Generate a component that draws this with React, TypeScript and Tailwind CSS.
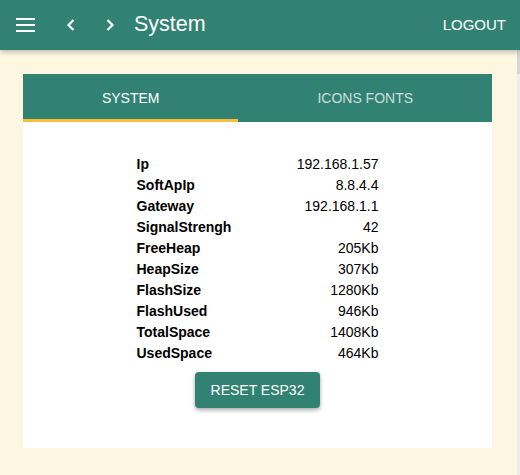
import React, { useState } from "react";

const rows: [string, string][] = [
  ["Ip", "192.168.1.57"],
  ["SoftApIp", "8.8.4.4"],
  ["Gateway", "192.168.1.1"],
  ["SignalStrengh", "42"],
  ["FreeHeap", "205Kb"],
  ["HeapSize", "307Kb"],
  ["FlashSize", "1280Kb"],
  ["FlashUsed", "946Kb"],
  ["TotalSpace", "1408Kb"],
  ["UsedSpace", "464Kb"],
];

export default function App() {
  const [tab, setTab] = useState(0);

  return (
    <div className="h-[475px] flex flex-col bg-[#fdf6e1] font-['Liberation_Sans',Arial,sans-serif] overflow-hidden">
      <header className="relative z-10 h-[50px] shrink-0 flex items-center bg-[#318273] text-white shadow-[0_2px_5px_rgba(0,0,0,0.25)]">
        <button className="ml-[16px] w-[19px] flex flex-col gap-[4px]">
          <span className="h-[2px] bg-white" />
          <span className="h-[2px] bg-white" />
          <span className="h-[2px] bg-white" />
        </button>
        <button className="ml-[31px]">
          <svg width="10" height="14" viewBox="0 0 10 14" fill="none" stroke="white" strokeWidth="2.2">
            <path d="M7.5 2 L2.5 7 L7.5 12" />
          </svg>
        </button>
        <button className="ml-[29px]">
          <svg width="10" height="14" viewBox="0 0 10 14" fill="none" stroke="white" strokeWidth="2.2">
            <path d="M2.5 2 L7.5 7 L2.5 12" />
          </svg>
        </button>
        <h1 className="ml-[19px] text-[21.5px] leading-none">System</h1>
        <button className="ml-auto mr-[14px] text-[15px]">LOGOUT</button>
      </header>

      <div className="flex-1 flex">
        <main className="flex-1 pt-[24px] pl-[23px] pr-[25px]">
          <div className="bg-white h-[374px] flex flex-col">
            <div className="flex h-[48px] bg-[#318273]">
              {["SYSTEM", "ICONS FONTS"].map((t, i) => (
                <button
                  key={t}
                  onClick={() => setTab(i)}
                  className={`flex-auto flex items-center justify-center text-[14px] border-b-[3px] ${
                    tab === i ? "text-white border-[#fbbd3c]" : "text-white/75 border-transparent"
                  }`}
                >
                  <span className="pt-[3px]">{t}</span>
                </button>
              ))}
            </div>
            <div className="flex flex-col items-center pt-[31px]">
              <table className="w-[242px] text-[14px] leading-[16px] text-black">
                <tbody>
                  {rows.map(([k, v]) => (
                    <tr key={k} className="h-[21px]">
                      <td className="font-bold pt-[1px]">{k}</td>
                      <td className="text-right pt-[1px]">{v}</td>
                    </tr>
                  ))}
                </tbody>
              </table>
              <button className="mt-[9px] w-[125px] h-[36px] rounded-[4px] bg-[#318273] text-white text-[14px] shadow-[0_2px_4px_rgba(0,0,0,0.35)]">
                RESET ESP32
              </button>
            </div>
          </div>
        </main>
        <div className="w-[3px] bg-[#eeeeee] flex flex-col">
          <div className="h-[24px] bg-[#d6d6d6]" />
        </div>
      </div>
    </div>
  );
}
